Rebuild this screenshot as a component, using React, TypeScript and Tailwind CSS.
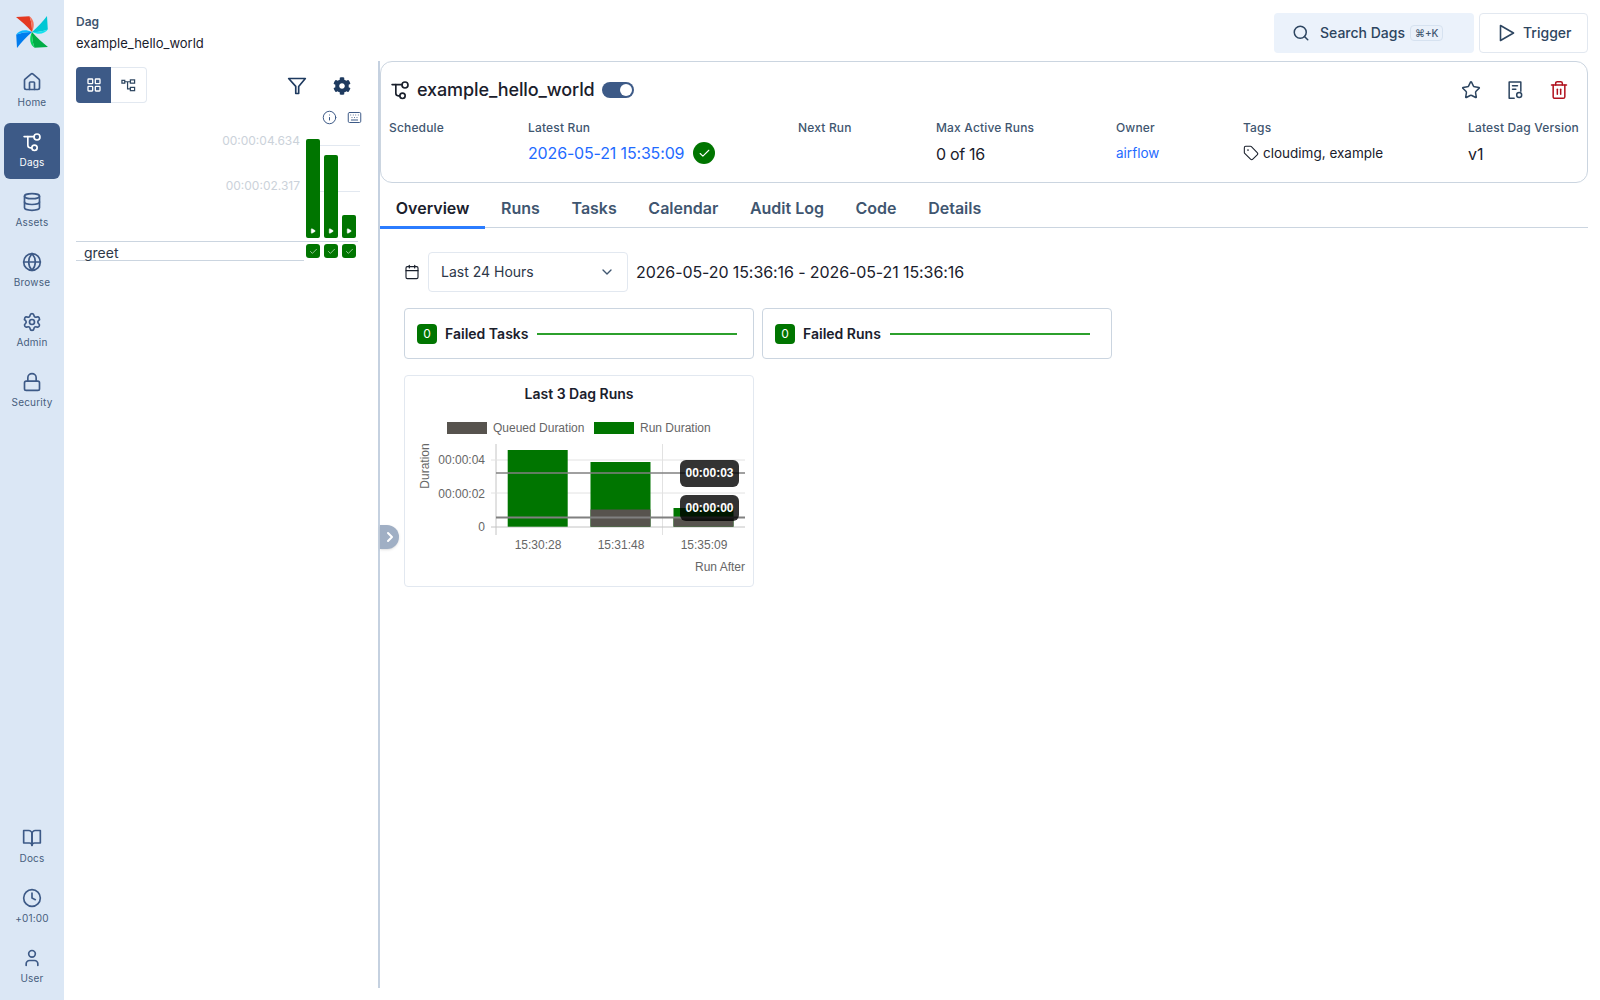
import React from "react";
import { Home, Database, Globe, Settings, Lock, Clock, User, Search, Star, Trash2, Tag, Calendar, ChevronDown, ChevronRight, Check, Info, Keyboard, LayoutGrid, Play } from "lucide-react";
import { FaCog } from "react-icons/fa";
import { FiBookOpen } from "react-icons/fi";

function DagIcon({ className }: { className?: string }) {
  return (
    <svg viewBox="0 0 24 24" fill="none" stroke="currentColor" strokeWidth="2" strokeLinecap="round" strokeLinejoin="round" className={className}>
      <path d="M2.5 5.5h12" />
      <path d="M7 5.5v10.5a3 3 0 0 0 3 3h1.5" />
      <circle cx="18" cy="6" r="3.6" />
      <circle cx="15" cy="19" r="3.2" />
    </svg>
  );
}

const BLADES = [
  { dark: "#e43921", light: "#f4725a", rot: 0 },
  { dark: "#00c7d4", light: "#11e1ee", rot: 90 },
  { dark: "#00ad46", light: "#04d659", rot: 180 },
  { dark: "#017cee", light: "#0cb6ff", rot: 270 },
];

function Logo() {
  return (
    <svg viewBox="0 0 32 32" className="w-8 h-8">
      {BLADES.map((b) => (
        <g key={b.rot} transform={`rotate(${b.rot} 16 16)`}>
          <path d="M0 1 L13.5 0.2 C15.5 6 16.2 11 16 16 C11 10 5 5 0 1 Z" fill={b.dark} />
          <path d="M13.5 0.2 C17.5 3 19.5 9 16 16 C16.2 11 15.5 6 13.5 0.2 Z" fill={b.light} />
        </g>
      ))}
    </svg>
  );
}

function NavItem({ icon: Icon, label, active }: { icon: React.ElementType; label: string; active?: boolean }) {
  return (
    <div className={`w-14 h-[56px] rounded-md flex flex-col items-center justify-center ${active ? "bg-[#3d5a87] text-white" : "text-[#3d5a87]"}`}>
      <Icon className="w-5 h-5" strokeWidth={2} />
      <span className={`text-[10px] leading-4 mt-0.5 tracking-[0.02em] ${active ? "text-white" : "text-[#475e7d]"}`}>{label}</span>
    </div>
  );
}

function Field({ label, children, className }: { label: string; children?: React.ReactNode; className?: string }) {
  return (
    <div className={className}>
      <div className="text-xs font-medium text-[#3f5670] leading-4 tracking-[0.014em]">{label}</div>
      <div className="h-[34px] flex items-center">{children}</div>
    </div>
  );
}

function GridBar({ h }: { h: string }) {
  return (
    <div className="w-[14px] flex flex-col items-center gap-[6px]">
      <div className="h-[99px] flex items-end">
        <div className={`w-[14px] ${h} bg-[#007500] rounded-[2px] flex items-end justify-center pb-1`}>
          <Play className="w-[6px] h-[6px] text-white fill-white" />
        </div>
      </div>
      <div className="w-[14px] h-[14px] rounded-[3px] bg-[#007500] flex items-center justify-center">
        <Check className="w-[9px] h-[9px] text-white" strokeWidth={1.5} />
      </div>
    </div>
  );
}

function Stat({ label }: { label: string }) {
  return (
    <div className="w-[350px] h-[51px] border border-[#cbd5e0] rounded flex items-center pl-[12px]">
      <span className="w-5 h-5 rounded bg-[#007500] text-white text-xs flex items-center justify-center">0</span>
      <span className="ml-2 text-sm font-semibold text-[#1a202c]">{label}</span>
      <div className="ml-[9px] h-[2px] w-[200px] bg-[#2ca02c]" />
    </div>
  );
}

function Chart() {
  const font = "'Liberation Sans', Arial, sans-serif";
  const txt = { fontFamily: font, fontSize: 12, fill: "#666" } as const;
  const ox = 405, oy = 412;
  const X = (n: number) => n - ox;
  const Y = (n: number) => n - oy;
  return (
    <svg width="346" height="170" viewBox="0 0 346 170" className="block">
      <rect x={X(447)} y={Y(422)} width="40" height="12" fill="#57534e" />
      <text x={X(493)} y={Y(432)} {...txt}>Queued Duration</text>
      <rect x={X(594)} y={Y(422)} width="40" height="12" fill="#007500" />
      <text x={X(640)} y={Y(432)} {...txt}>Run Duration</text>

      <line x1={X(496)} x2={X(496)} y1={Y(444)} y2={Y(535)} stroke="#c4c4c4" />
      <line x1={X(662.5)} x2={X(662.5)} y1={Y(444)} y2={Y(535)} stroke="#e2e2e2" />
      {[460, 493].map((y) => (
        <line key={y} x1={X(491)} x2={X(745)} y1={Y(y)} y2={Y(y)} stroke="#e2e2e2" />
      ))}
      <line x1={X(491)} x2={X(745)} y1={Y(527)} y2={Y(527)} stroke="#c4c4c4" />

      <rect x={X(507.7)} y={Y(450)} width="60" height="76.7" fill="#007500" />
      <rect x={X(590.5)} y={Y(462)} width="60" height="64.7" fill="#007500" />
      <rect x={X(590.5)} y={Y(509.5)} width="60" height="17.2" fill="#57534e" />
      <rect x={X(673.5)} y={Y(508)} width="60" height="18.7" fill="#007500" />
      <rect x={X(673.5)} y={Y(517)} width="60" height="9.7" fill="#57534e" />

      <line x1={X(496)} x2={X(745)} y1={Y(473)} y2={Y(473)} stroke="#808080" strokeWidth="1.5" />
      <line x1={X(496)} x2={X(745)} y1={Y(517.5)} y2={Y(517.5)} stroke="#808080" strokeWidth="2" />

      <rect x={X(680)} y={Y(460)} width="59" height="27" rx="6" fill="#000" opacity="0.8" />
      <text x={X(709.5)} y={Y(477)} textAnchor="middle" fontFamily={font} fontSize="12" fontWeight="700" fill="#fff">00:00:03</text>
      <rect x={X(680)} y={Y(495)} width="59" height="26" rx="6" fill="#000" opacity="0.8" />
      <text x={X(709.5)} y={Y(512)} textAnchor="middle" fontFamily={font} fontSize="12" fontWeight="700" fill="#fff">00:00:00</text>

      <text x={X(485)} y={Y(464)} textAnchor="end" {...txt}>00:00:04</text>
      <text x={X(485)} y={Y(498)} textAnchor="end" {...txt}>00:00:02</text>
      <text x={X(485)} y={Y(531)} textAnchor="end" {...txt}>0</text>
      <text transform={`translate(${X(429)} ${Y(466)}) rotate(-90)`} textAnchor="middle" {...txt}>Duration</text>

      <text x={X(538)} y={Y(549)} textAnchor="middle" {...txt}>15:30:28</text>
      <text x={X(621)} y={Y(549)} textAnchor="middle" {...txt}>15:31:48</text>
      <text x={X(704)} y={Y(549)} textAnchor="middle" {...txt}>15:35:09</text>
      <text x={X(745)} y={Y(571)} textAnchor="end" {...txt}>Run After</text>
    </svg>
  );
}

export default function App() {
  return (
    <div className="h-[1000px] w-[1600px] flex bg-white overflow-hidden text-[#1a202c]" style={{ fontFamily: "Inter, 'Liberation Sans', sans-serif" }}>
      <nav className="w-16 bg-[#dbe7f5] flex flex-col items-center justify-between pt-4 shrink-0">
        <div className="flex flex-col items-center">
          <div className="mb-[15px]"><Logo /></div>
          <div className="flex flex-col gap-[4px]">
            <NavItem icon={Home} label="Home" />
            <NavItem icon={DagIcon} label="Dags" active />
            <NavItem icon={Database} label="Assets" />
            <NavItem icon={Globe} label="Browse" />
            <NavItem icon={Settings} label="Admin" />
            <NavItem icon={Lock} label="Security" />
          </div>
        </div>
        <div className="flex flex-col gap-[4px] mb-[5px]">
          <NavItem icon={FiBookOpen} label="Docs" />
          <NavItem icon={Clock} label="+01:00" />
          <NavItem icon={User} label="User" />
        </div>
      </nav>

      <div className="flex-1 flex flex-col min-w-0 pl-3 pr-[12px]">
        <header className="h-[61px] flex justify-between pt-[13px] shrink-0">
          <div>
            <div className="text-xs font-semibold text-[#3f5670] leading-4 mt-[1px]">Dag</div>
            <div className="text-[13px] leading-5 mt-[3px]">example_hello_world</div>
          </div>
          <div className="flex gap-[5px] h-10">
            <div className="w-[200px] bg-[#ebf2fb] rounded flex items-center pl-[18px] text-sm font-medium text-[#2d4560]">
              <Search className="w-[18px] h-[18px] text-[#2d4560]" />
              <span className="ml-[10px]">Search Dags</span>
              <span className="ml-[5px] border border-[#d6e2f0] rounded px-1 text-[10px] leading-[14px] text-[#3f5670] bg-[#eaf1fa]">⌘+K</span>
            </div>
            <div className="w-[109px] border border-[#e2e8f0] rounded flex items-center pl-[17px] text-sm font-medium text-[#2d4560]">
              <svg viewBox="0 0 20 20" className="w-5 h-5 text-[#2d4560]" fill="none" stroke="currentColor" strokeWidth="1.6" strokeLinejoin="round"><path d="M3.5 2.5 L16.5 10 L3.5 17.5 Z" /></svg>
              <span className="ml-[6px]">Trigger</span>
            </div>
          </div>
        </header>

        <div className="flex flex-1 mb-[12px] min-h-0">
          <aside className="w-[302px] shrink-0 relative">
            <div className="flex items-start justify-between pt-[6px] pr-[27px]">
              <div className="flex h-9 w-[71px]">
                <div className="w-[35px] bg-[#3d5a87] rounded-l flex items-center justify-center text-white">
                  <LayoutGrid className="w-4 h-4" strokeWidth={2} />
                </div>
                <div className="w-[36px] border border-l-0 border-[#e2e8f0] rounded-r flex items-center justify-center text-[#2d4560]">
                  <svg viewBox="0 0 16 16" className="w-[15px] h-[15px]" fill="none" stroke="currentColor" strokeWidth="1.3">
                    <rect x="1" y="2.5" width="3" height="3" />
                    <rect x="10" y="2" width="4.5" height="3.5" />
                    <rect x="10" y="10" width="4.5" height="3.5" />
                    <path d="M4 4h6M7 4v7.5h3" />
                  </svg>
                </div>
              </div>
              <div className="flex items-center gap-[26px] h-9 pt-[1px]">
                <svg viewBox="0 0 24 24" className="w-[20px] h-[20px] text-[#1e3a5f]" fill="none" stroke="currentColor" strokeWidth="2" strokeLinejoin="round"><path d="M2 3h20l-8 9.5V21h-3.5v-8.5Z" /></svg>
                <FaCog className="w-[18px] h-[18px] text-[#1e3a5f]" />
              </div>
            </div>
            <div className="flex justify-end gap-[10px] pr-[16px] mt-[7px] h-4 text-[#3d5a87]">
              <Info className="w-[15px] h-[15px]" strokeWidth={1.6} />
              <Keyboard className="w-[15px] h-[15px]" strokeWidth={1.6} />
            </div>
            <div className="flex mt-[13px]">
              <div className="w-[230px] relative">
                <div className="h-[96px] text-xs text-[#cbd2da]">
                  <div className="leading-4 absolute right-[6px] top-[-6px]">00:00:04.634</div>
                  <div className="leading-4 absolute right-[6px] top-[39px]">00:00:02.317</div>
                </div>
              </div>
              <div className="relative w-[58px] h-[122px]">
                <div className="absolute left-0 right-[4px] top-[6px] h-px bg-[#e2e8f0]" />
                <div className="absolute left-0 right-[4px] top-[52px] h-px bg-[#e2e8f0]" />
                <div className="relative flex gap-1"><GridBar h="h-[99px]" /><GridBar h="h-[83px]" /><GridBar h="h-[23px]" /></div>
              </div>
            </div>
            <div className="absolute left-0 top-[180px] w-[228px] h-5 border-y border-[#cbd5e0]"></div>
            <div className="absolute left-0 top-[180px] w-[282px] h-px bg-[#cbd5e0]" />
            <div className="absolute left-[8px] top-[182px] text-sm leading-5 text-[#2d3748]">greet</div>
          </aside>

          <main className="flex-1 min-w-0 border-l-2 border-[#c5d1e0] relative">
            <div className="absolute left-0 top-[464px] w-[19px] h-6 bg-[#a0afc4] rounded-r-full shadow flex items-center justify-center">
              <ChevronRight className="w-4 h-4 text-white" strokeWidth={3} />
            </div>
            <section className="border border-[#cbd5e0] rounded-[12px] h-[122px] pl-[8px] pr-[8px] pt-[12px]">
              <div className="flex justify-between items-center h-8">
                <div className="flex items-center">
                  <DagIcon className="w-5 h-5 text-[#1a202c] ml-[1px]" />
                  <span className="ml-[7px] text-lg font-medium text-[#1a202c] tracking-[-0.006em]">example_hello_world</span>
                  <span className="ml-[7px] w-8 h-4 rounded-full bg-[#3d5a87] flex items-center justify-end pr-[2px]"><span className="w-3 h-3 bg-white rounded-full" /></span>
                </div>
                <div className="flex items-center gap-[24px] pr-[10px] text-[#2d4560]">
                  <Star className="w-5 h-5" strokeWidth={1.8} />
                  <svg viewBox="0 0 24 24" className="w-5 h-5" fill="none" stroke="currentColor" strokeWidth="1.8" strokeLinecap="round" strokeLinejoin="round"><path d="M11 22H5V2.5h14v11" /><path d="M9 7h6M9 11h4" /><circle cx="17" cy="18" r="3" /></svg>
                  <Trash2 className="w-5 h-5 text-[#b0101c]" strokeWidth={1.8} />
                </div>
              </div>
              <div className="flex mt-[14px]">
                <Field label="Schedule" className="w-[139px]" />
                <Field label="Latest Run" className="w-[270px]">
                  <span className="text-base text-[#1f6bff] tracking-[-0.01em]">2026-05-21 15:35:09</span>
                  <span className="ml-[9px] w-[22px] h-[22px] rounded-full bg-[#007500] flex items-center justify-center"><Check className="w-[13px] h-[13px] text-white" strokeWidth={2} /></span>
                </Field>
                <Field label="Next Run" className="w-[138px]" />
                <Field label="Max Active Runs" className="w-[180px]"><span className="text-base tracking-[-0.02em] mt-[2px]">0 of 16</span></Field>
                <Field label="Owner" className="w-[127px]"><span className="text-[13.5px] text-[#1f6bff]">airflow</span></Field>
                <Field label="Tags" className="w-[225px]">
                  <Tag className="w-4 h-4" strokeWidth={1.6} />
                  <span className="ml-1 text-[13.5px]">cloudimg, example</span>
                </Field>
                <Field label="Latest Dag Version" className="flex-1"><span className="text-base mt-[2px]">v1</span></Field>
              </div>
            </section>

            <div className="flex h-[45px] border-b border-[#cbd5e0] text-base font-semibold text-[#3f5670]">
              {["Overview", "Runs", "Tasks", "Calendar", "Audit Log", "Code", "Details"].map((t, i) => (
                <div key={t} className={`px-[15.8px] pt-[6px] flex items-center h-[46px] border-b-[3px] ${i === 0 ? "border-[#2b7cff] text-[#1a202c]" : "border-transparent"}`}>{t}</div>
              ))}
            </div>

            <div className="pl-6 pt-[24px]">
              <div className="flex items-center h-10">
                <Calendar className="w-4 h-4 text-[#1a202c]" strokeWidth={1.7} />
                <div className="ml-2 w-[200px] h-10 border border-[#e2e8f0] rounded flex items-center justify-between pl-3 pr-3 text-sm text-[#2d3748]">
                  Last 24 Hours
                  <ChevronDown className="w-4 h-4 text-[#3f5670]" strokeWidth={2} />
                </div>
                <span className="ml-2 text-base text-[#1a202c] tracking-[-0.006em]">2026-05-20 15:36:16 - 2026-05-21 15:36:16</span>
              </div>
              <div className="flex gap-2 mt-4">
                <Stat label="Failed Tasks" />
                <Stat label="Failed Runs" />
              </div>
              <div className="mt-4 w-[350px] h-[212px] border border-[#e2e8f0] rounded">
                <div className="text-center text-sm font-semibold text-[#1a202c] pt-2 leading-5 h-[36px]">Last 3 Dag Runs</div>
                <Chart />
              </div>
            </div>
          </main>
        </div>
      </div>
    </div>
  );
}
